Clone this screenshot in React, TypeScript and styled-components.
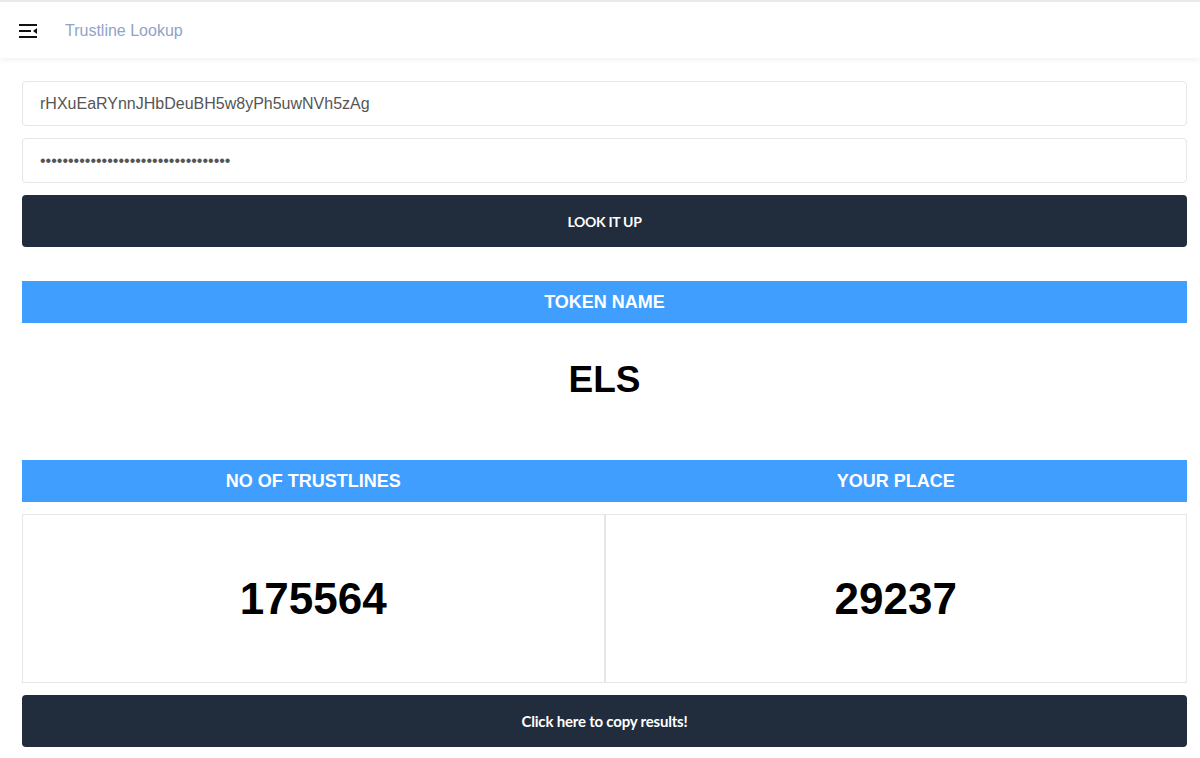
import styled, { createGlobalStyle } from "styled-components";

const GlobalStyle = createGlobalStyle`
  html, body {
    margin: 0;
    padding: 0;
    background: #ffffff;
    font-family: "Liberation Sans", Arial, sans-serif;
  }
`;

function FoldIcon() {
  return (
    <svg width="18" height="14" viewBox="0 0 18 14" fill="#111">
      <rect x="0" y="0" width="18" height="2" />
      <rect x="0" y="6" width="12" height="2" />
      <polygon points="14,7 18,4 18,10" />
      <rect x="0" y="12" width="18" height="2" />
    </svg>
  );
}

export default function App() {
  return (
    <>
      <GlobalStyle />
      <Header>
        <MenuButton>
          <FoldIcon />
        </MenuButton>
        <Title>Trustline Lookup</Title>
      </Header>
      <Main>
        <Form>
          <Input defaultValue="rHXuEaRYnnJHbDeuBH5w8yPh5uwNVh5zAg" />
          <Input type="password" defaultValue="sXXXXXXXXXXXXXXXXXXXXXXXXXXXXXXXXX" />
          <DarkButton>LOOK IT UP</DarkButton>
        </Form>

        <Section>
          <Banner>
            <BannerLabel>TOKEN NAME</BannerLabel>
          </Banner>
          <TokenValue>ELS</TokenValue>
        </Section>

        <Banner $cols={2}>
          <BannerLabel>NO OF TRUSTLINES</BannerLabel>
          <BannerLabel>YOUR PLACE</BannerLabel>
        </Banner>
        <Results>
          <Cell>175564</Cell>
          <Cell>29237</Cell>
        </Results>
        <DarkButton $small>Click here to copy results!</DarkButton>
      </Main>
    </>
  );
}

const Header = styled.header`
  height: 56px;
  border-top: 2px solid #e9e9e9;
  display: flex;
  align-items: center;
  gap: 28px;
  padding: 0 19px;
  background: #fff;
  box-shadow: 0 2px 6px rgba(0, 0, 0, 0.06);
`;

const MenuButton = styled.div`
  display: flex;
  align-items: center;
  margin-top: 2px;
`;

const Title = styled.span`
  font-size: 16px;
  color: #8fa3c7;
  margin-top: 2px;
`;

const Main = styled.main`
  display: flex;
  flex-direction: column;
  padding: 23px 13px 0 22px;
`;

const Form = styled.div`
  display: flex;
  flex-direction: column;
  gap: 12px;
`;

const Input = styled.input`
  box-sizing: border-box;
  height: 45px;
  width: 100%;
  padding: 0 17px;
  border: 1px solid #e4e6ec;
  border-radius: 4px;
  font-family: "Liberation Sans", Arial, sans-serif;
  font-size: 16px;
  color: #555;
  outline: none;
`;

const DarkButton = styled.button<{ $small?: boolean }>`
  height: 52px;
  width: 100%;
  border: none;
  border-radius: 4px;
  background: #212c3d;
  color: #fff;
  font-family: Lato, "Open Sans", sans-serif;
  font-weight: 700;
  font-size: ${({ $small }) => ($small ? "15px" : "14px")};
  letter-spacing: ${({ $small }) => ($small ? "-0.2px" : "-0.3px")};
  cursor: pointer;
`;

const Section = styled.section`
  margin-top: 34px;
  display: flex;
  flex-direction: column;
`;

const Banner = styled.div<{ $cols?: number }>`
  height: 42px;
  display: grid;
  grid-template-columns: repeat(${({ $cols }) => $cols ?? 1}, 1fr);
  align-items: center;
  background: #409eff;
`;

const BannerLabel = styled.div`
  text-align: center;
  color: #fff;
  font-weight: 700;
  font-size: 18px;
`;

const TokenValue = styled.div`
  height: 113px;
  margin-bottom: 24px;
  display: flex;
  align-items: center;
  justify-content: center;
  font-size: 37px;
  font-weight: 700;
  color: #000;
`;

const Results = styled.div`
  display: grid;
  grid-template-columns: 1fr 1fr;
  margin: 12px 0;
`;

const Cell = styled.div`
  height: 167px;
  border: 1px solid #e6e6e6;
  display: flex;
  align-items: center;
  justify-content: center;
  font-size: 44px;
  font-weight: 700;
  color: #000;
`;
